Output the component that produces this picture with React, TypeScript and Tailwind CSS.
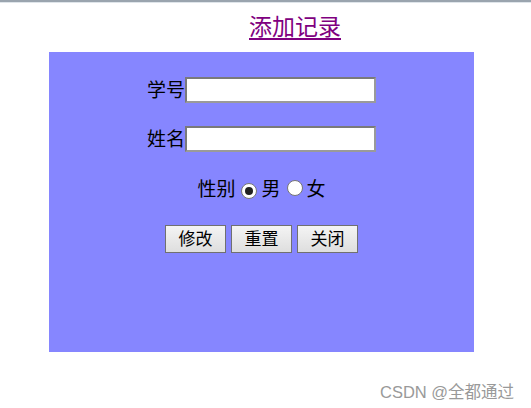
import React from "react";

const cjk = { fontFamily: '"Liberation Serif", "Noto Sans CJK SC", serif' };

function Radio({ checked }: { checked?: boolean }) {
  return (
    <span className="inline-flex h-[16px] w-[16px] items-center justify-center rounded-full border border-[#767676] bg-white">
      {checked && <span className="h-[8px] w-[8px] rounded-full bg-[#222]" />}
    </span>
  );
}

function Btn({ children }: { children: React.ReactNode }) {
  return (
    <button className="flex h-[28px] w-[61px] items-center justify-center border border-[#707070] bg-gradient-to-b from-[#f4f4f4] to-[#dedede] text-[17px] leading-none text-black">
      {children}
    </button>
  );
}

export default function App() {
  return (
    <div className="relative h-[408px] w-[531px] overflow-hidden bg-white" style={cjk}>
      <div className="h-[2px] w-full bg-[#9aa4ae]" />
      <div className="h-[1px] w-full bg-[#dfe5ea]" />
      <div className="flex pl-[249px] pt-[11px]">
        <span className="text-[23px] leading-[28px] text-[#800080] underline decoration-[1.5px] underline-offset-[3px]">
          添加记录
        </span>
      </div>
      <div className="ml-[49px] mt-[10px] flex h-[300px] w-[425px] flex-col items-center bg-[#8686ff] pt-[25px]">
        <div className="flex h-[26px] items-center">
          <span className="text-[19px] leading-none text-black">学号</span>
          <input className="h-[26px] w-[191px] border-2 border-[#7a7a7a] border-b-[#9a9a9a] border-r-[#9a9a9a] bg-white outline-none" />
        </div>
        <div className="mt-[23px] flex h-[26px] items-center">
          <span className="text-[19px] leading-none text-black">姓名</span>
          <input className="h-[26px] w-[191px] border-2 border-[#7a7a7a] border-b-[#9a9a9a] border-r-[#9a9a9a] bg-white outline-none" />
        </div>
        <div className="mt-[27px] flex items-center text-[19px] leading-none text-black">
          <span>性别</span>
          <span className="ml-[6px]"><Radio checked /></span>
          <span className="ml-[4px]">男</span>
          <span className="ml-[6px]"><Radio /></span>
          <span className="ml-[4px]">女</span>
        </div>
        <div className="mt-[26px] flex gap-[5px]">
          <Btn>修改</Btn>
          <Btn>重置</Btn>
          <Btn>关闭</Btn>
        </div>
      </div>
      <div
        className="absolute left-[380px] top-[380px] text-[16.5px] text-[#999999]"
        style={{ fontFamily: '"Liberation Sans", "Noto Sans CJK SC", sans-serif' }}
      >
        CSDN @全都通过
      </div>
    </div>
  );
}
